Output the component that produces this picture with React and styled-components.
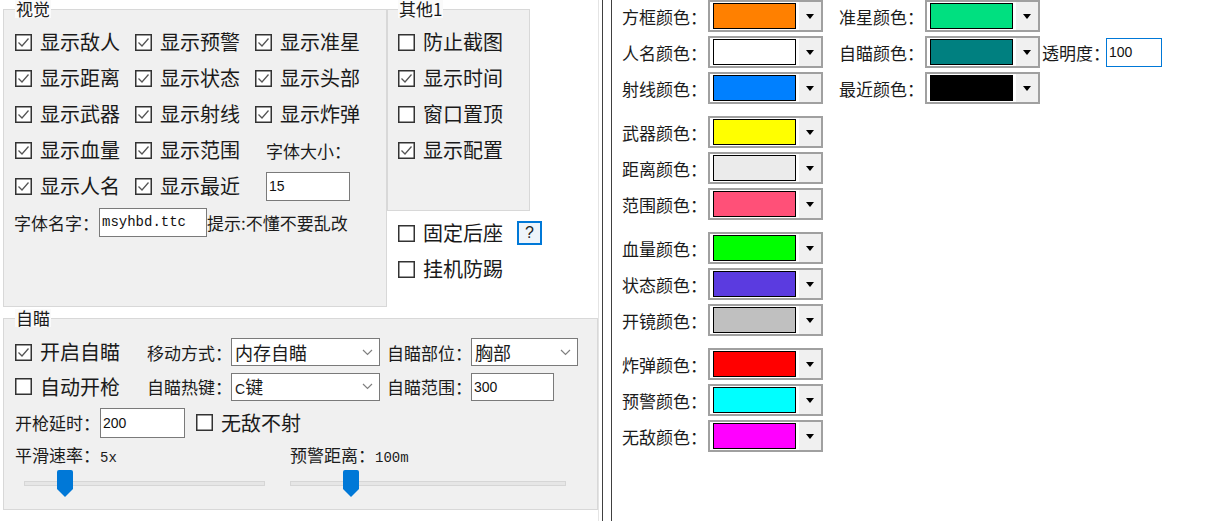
import styled, { createGlobalStyle } from "styled-components";

const GlobalStyle = createGlobalStyle`
  * { box-sizing: border-box; }
  html, body { margin: 0; padding: 0; background: #fff; }
  body {
    font-family: "Noto Sans CJK SC", "Noto Sans", sans-serif;
    color: #1b1b1b;
  }
`;

const Window = styled.div`
  width: 1221px;
  height: 521px;
  display: flex;
  overflow: hidden;
  background: #fff;
`;

const LeftPane = styled.div`
  width: 599px;
  padding-left: 3px;
  border-right: 1px solid #e4e4e4;
  display: flex;
  flex-direction: column;
`;

const Divider = styled.div`
  width: 10px;
  margin-left: 3px;
  border-left: 1px solid #404040;
  border-right: 1px solid #404040;
`;

const RightPane = styled.div`
  flex: 1;
  padding-left: 10px;
  display: flex;
  flex-direction: column;
  gap: 12px;
`;

const TopRow = styled.div`
  display: flex;
  height: 307px;
`;

const SideColumn = styled.div`
  display: flex;
  flex-direction: column;
`;

const Group = styled.fieldset`
  margin: ${p => p.$top || 0}px 0 0 0;
  padding: 0 0 0 ${p => p.$pad || 11}px;
  min-width: 0;
  width: ${p => p.$w}px;
  height: ${p => p.$h}px;
  border: 1px solid #d8d8d8;
  background: #f0f0f0;
`;

const Legend = styled.legend`
  padding: 0 1px;
  font-size: 17px;
  line-height: 18px;
  background: #fafafa;
`;

const CheckGrid = styled.div`
  display: grid;
  grid-template-columns: 120px 120px 1fr;
  grid-auto-rows: 36px;
  align-items: center;
  padding-top: 6px;
`;

const CheckList = styled.div`
  display: flex;
  flex-direction: column;
  padding-top: ${p => p.$top || 6}px;
  padding-left: ${p => p.$left || 0}px;
`;

const Line = styled.div`
  display: flex;
  align-items: center;
  height: ${p => p.$h || 36}px;
  margin-left: ${p => p.$shift || 0}px;
`;

const CheckLabel = styled.div`
  display: flex;
  align-items: center;
  gap: 8px;
  margin-left: ${p => p.$indent || 0}px;
  font-size: 20px;
  line-height: 1;
  white-space: nowrap;
  color: #1a1a1a;
`;

const Label = styled.span`
  display: inline-block;
  margin-left: ${p => p.$indent || 0}px;
  font-size: 17px;
  line-height: 1;
  white-space: nowrap;
  color: #1b1b1b;
`;

const Value = styled.span`
  font-family: "Liberation Mono", monospace;
  font-size: 14px;
`;

const TextBox = styled.input.attrs({ readOnly: true })`
  width: ${p => p.$w}px;
  height: ${p => p.$h || 29}px;
  margin-left: ${p => p.$indent || 0}px;
  padding: 0 2px;
  border: 1px solid ${p => (p.$focus ? "#0078d7" : "#7a7a7a")};
  background: #fff;
  color: #111;
  font-family: ${p => (p.$mono ? '"Liberation Mono", monospace' : '"Liberation Sans", sans-serif')};
  font-size: 14px;
  outline: none;
`;

const HelpButton = styled.div`
  width: 25px;
  height: 24px;
  margin-left: 14px;
  border: 2px solid #0078d7;
  background: #eef4fa;
  display: flex;
  align-items: center;
  justify-content: center;
  font-family: "Liberation Sans", sans-serif;
  font-size: 16px;
  color: #222;
`;

const AimBody = styled.div`
  padding-top: 8px;
  display: flex;
  flex-direction: column;
`;

const AimGrid = styled.div`
  display: grid;
  grid-template-columns: 132px 84px 156px 84px 1fr;
  grid-template-rows: 34px 35px;
  align-items: center;
`;

const SplitRow = styled.div`
  display: grid;
  grid-template-columns: 275px 1fr;
  align-items: center;
  height: ${p => p.$h}px;
`;

const SelectBox = styled.div`
  width: ${p => p.$w}px;
  height: 28px;
  border: 1px solid #7a7a7a;
  background: #fff;
  display: flex;
  align-items: center;
  justify-content: space-between;
  padding: 0 6px 0 3px;
  font-size: 18px;
  line-height: 1;
  white-space: nowrap;
`;

const Small = styled.span`
  font-family: "Liberation Sans", sans-serif;
  font-size: 14px;
`;

const Track = styled.div`
  position: relative;
  width: ${p => p.$w}px;
  height: 5px;
  margin-left: ${p => p.$offset || 0}px;
  background: #e6e6e6;
  border: 1px solid #d6d6d6;
`;

const Thumb = styled.svg`
  position: absolute;
  top: -12px;
`;

const ColorGroup = styled.div`
  display: flex;
  flex-direction: column;
  gap: 4px;
`;

const ColorRow = styled.div`
  display: flex;
  align-items: center;
  height: 32px;
`;

const ColorField = styled.div`
  display: flex;
  align-items: center;
  margin-left: ${p => p.$indent || 0}px;
`;

const ColorName = styled.span`
  width: 86px;
  font-size: 17px;
  line-height: 1;
  white-space: nowrap;
`;

const Combo = styled.div`
  width: 115px;
  height: 32px;
  border: 2px solid #a0a0a0;
  background: #fff;
  display: flex;
  align-items: center;
  padding-left: 3px;
  gap: 3px;
`;

const Swatch = styled.div`
  width: 83px;
  height: 26px;
  border: 1px solid #000;
  background: ${p => p.$color};
`;

const DropButton = styled.div`
  width: 22px;
  height: 28px;
  background: #f0f0f0;
  display: flex;
  align-items: center;
  justify-content: center;
`;

function Box({ checked }) {
  return (
    <svg width="17" height="17" viewBox="0 0 17 17">
      <rect x="0.75" y="0.75" width="15.5" height="15.5" fill="#fff" stroke="#333" strokeWidth="1.5" />
      {checked && <path d="M3.5 8.5 L7 12 L13.5 4.5" fill="none" stroke="#555" strokeWidth="1.3" />}
    </svg>
  );
}

function Check({ text, checked, indent }) {
  return (
    <CheckLabel $indent={indent}>
      <Box checked={checked} />
      {text}
    </CheckLabel>
  );
}

function Select({ width, children }) {
  return (
    <SelectBox $w={width}>
      <span>{children}</span>
      <svg width="11" height="7" viewBox="0 0 11 7">
        <path d="M1 1 L5.5 5.5 L10 1" fill="none" stroke="#808080" strokeWidth="1.2" />
      </svg>
    </SelectBox>
  );
}

function Slider({ width, offset, value, max }) {
  const left = Math.round((value / max) * (width - 16));
  return (
    <Track $w={width} $offset={offset}>
      <Thumb width="16" height="27" viewBox="0 0 16 27" style={{ left }}>
        <path d="M0 2 Q0 0 2 0 H14 Q16 0 16 2 V19 L8 27 L0 19 Z" fill="#0078d7" />
      </Thumb>
    </Track>
  );
}

function ColorPick({ name, color, indent }) {
  return (
    <ColorField $indent={indent}>
      <ColorName>{name}</ColorName>
      <Combo>
        <Swatch $color={color} />
        <DropButton>
          <svg width="8" height="5" viewBox="0 0 8 5">
            <path d="M0 0 H8 L4 5 Z" fill="#000" />
          </svg>
        </DropButton>
      </Combo>
    </ColorField>
  );
}

const visualChecks = [
  "显示敌人", "显示预警", "显示准星",
  "显示距离", "显示状态", "显示头部",
  "显示武器", "显示射线", "显示炸弹",
];

const colorGroups = [
  [["武器颜色：", "#ffff00"], ["距离颜色：", "#ebebeb"], ["范围颜色：", "#ff5078"]],
  [["血量颜色：", "#00ff00"], ["状态颜色：", "#5b3be0"], ["开镜颜色：", "#c0c0c0"]],
  [["炸弹颜色：", "#ff0000"], ["预警颜色：", "#00ffff"], ["无敌颜色：", "#ff00ff"]],
];

export default function App() {
  return (
    <>
      <GlobalStyle />
      <Window>
        <LeftPane>
          <TopRow>
            <Group $w={384} $h={307}>
              <Legend>视觉</Legend>
              <CheckGrid>
                {visualChecks.map(t => (
                  <Check key={t} text={t} checked />
                ))}
                <Check text="显示血量" checked />
                <Check text="显示范围" checked />
                <Label $indent={11}>字体大小：</Label>
                <Check text="显示人名" checked />
                <Check text="显示最近" checked />
                <TextBox $w={84} $indent={11} value="15" />
              </CheckGrid>
              <Line $shift={-1}>
                <Label>字体名字：</Label>
                <TextBox $w={108} $mono value="msyhbd.ttc" />
                <Label>提示:不懂不要乱改</Label>
              </Line>
            </Group>
            <SideColumn>
              <Group $w={143} $h={211} $pad={10}>
                <Legend>其他1</Legend>
                <CheckList>
                  <Line><Check text="防止截图" /></Line>
                  <Line><Check text="显示时间" checked /></Line>
                  <Line><Check text="窗口置顶" /></Line>
                  <Line><Check text="显示配置" checked /></Line>
                </CheckList>
              </Group>
              <CheckList $top={4} $left={11}>
                <Line>
                  <Check text="固定后座" />
                  <HelpButton>?</HelpButton>
                </Line>
                <Line><Check text="挂机防踢" /></Line>
              </CheckList>
            </SideColumn>
          </TopRow>

          <Group $w={595} $h={201} $top={2}>
            <Legend>自瞄</Legend>
            <AimBody>
              <AimGrid>
                <Check text="开启自瞄" checked />
                <Label>移动方式：</Label>
                <Select width={149}>内存自瞄</Select>
                <Label>自瞄部位：</Label>
                <Select width={107}>胸部</Select>
                <Check text="自动开枪" />
                <Label>自瞄热键：</Label>
                <Select width={149}><Small>C</Small>键</Select>
                <Label>自瞄范围：</Label>
                <TextBox $w={83} $h={28} value="300" />
              </AimGrid>
              <Line $h={37}>
                <Label>开枪延时：</Label>
                <TextBox $w={85} $h={30} value="200" />
                <Check text="无敌不射" indent={11} />
              </Line>
              <SplitRow $h={28}>
                <Label>平滑速率：<Value>5x</Value></Label>
                <Label>预警距离：<Value>100m</Value></Label>
              </SplitRow>
              <SplitRow $h={28}>
                <Slider width={241} offset={9} value={5} max={35} />
                <Slider width={276} value={100} max={500} />
              </SplitRow>
            </AimBody>
          </Group>
        </LeftPane>

        <Divider />

        <RightPane>
          <ColorGroup>
            <ColorRow>
              <ColorPick name="方框颜色：" color="#ff8000" />
              <ColorPick name="准星颜色：" color="#00e080" indent={16} />
            </ColorRow>
            <ColorRow>
              <ColorPick name="人名颜色：" color="#ffffff" />
              <ColorPick name="自瞄颜色：" color="#008080" indent={16} />
              <Label $indent={2} style={{ width: 64 }}>透明度：</Label>
              <TextBox $w={56} $focus value="100" />
            </ColorRow>
            <ColorRow>
              <ColorPick name="射线颜色：" color="#0080ff" />
              <ColorPick name="最近颜色：" color="#000000" indent={16} />
            </ColorRow>
          </ColorGroup>
          {colorGroups.map((group, i) => (
            <ColorGroup key={i}>
              {group.map(([name, color]) => (
                <ColorRow key={name}>
                  <ColorPick name={name} color={color} />
                </ColorRow>
              ))}
            </ColorGroup>
          ))}
        </RightPane>
      </Window>
    </>
  );
}
